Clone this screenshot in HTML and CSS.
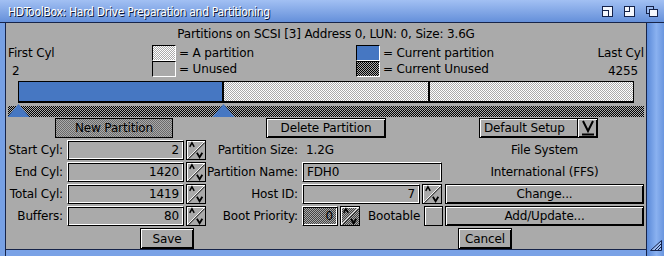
FILE: index.html
```html
<!DOCTYPE html>
<html>
<head>
<meta charset="utf-8">
<link rel="stylesheet" href="styles.css">
</head>
<body>
<svg class="defs" width="0" height="0">
  <symbol id="arr" viewBox="0 0 20 20">
    <path d="M1 19 L19 1" stroke="#fff" stroke-width="1"/>
    <path d="M2 19.5 L19.5 2" stroke="#000" stroke-width="1"/>
    <path d="M3 6.5 L5.5 2 L8 6.5" fill="none" stroke="#000" stroke-width="1.6"/>
    <path d="M11 13 L14 18 L17 13" fill="none" stroke="#000" stroke-width="2"/>
  </symbol>
  <symbol id="tri" viewBox="0 0 22 13">
    <path d="M0 13 L11 0 L22 13 Z" fill="#4677c2"/>
  </symbol>
</svg>
<div class="window">
  <div class="titlebar">
    <span class="title">HDToolBox: Hard Drive Preparation and Partitioning</span>
    <div class="gadgets">
      <svg class="gad" width="11" height="11" viewBox="0 0 11 11"><rect x="0.5" y="0.5" width="10" height="10" fill="#f4f7fd" stroke="#14224a"/><rect x="0.5" y="4.5" width="6" height="6" fill="#f4f7fd" stroke="#14224a"/></svg>
      <svg class="gad" width="11" height="11" viewBox="0 0 11 11"><rect x="0.5" y="0.5" width="10" height="10" fill="#f4f7fd" stroke="#14224a"/><rect x="0.5" y="0.5" width="5" height="5" fill="#f4f7fd" stroke="#14224a"/></svg>
      <svg class="gad" width="12" height="11" viewBox="0 0 12 11"><rect x="0.5" y="0.5" width="7" height="7" fill="#9dbbef" stroke="#14224a"/><rect x="3.5" y="3.5" width="8" height="7" fill="#f4f7fd" stroke="#14224a"/></svg>
    </div>
  </div>
  <div class="frame">
    <div class="lborder"></div>
    <div class="mid">
      <div class="content">
        <div class="header">Partitions on SCSI [3] Address 0, LUN: 0, Size: 3.6G</div>
        <div class="legend">
          <span class="cyl first">First Cyl</span>
          <div class="key"><span class="swatch sw-part"></span>= A partition</div>
          <div class="key"><span class="swatch sw-current"></span>= Current partition</div>
          <span class="cyl last">Last Cyl</span>
          <span class="cyl num first-num">2</span>
          <div class="key"><span class="swatch sw-unused"></span>= Unused</div>
          <div class="key"><span class="swatch sw-cur-unused"></span>= Current Unused</div>
          <span class="cyl num last-num">4255</span>
        </div>
        <div class="bar">
          <div class="seg seg-current" style="width:205px"></div>
          <div class="seg seg-part" style="width:206px"></div>
          <div class="seg seg-part seg-rest"></div>
        </div>
        <div class="slider">
          <svg class="handle" style="left:-1px" width="23" height="13"><use href="#tri"/></svg>
          <svg class="handle" style="left:204px" width="23" height="13"><use href="#tri"/></svg>
        </div>
        <div class="actions">
          <div class="btn ghost new">New Partition</div>
          <div class="btn delete">Delete Partition</div>
          <div class="btn cycle"><span class="cycle-text">Default Setup</span><span class="cycle-glyph"><svg width="14" height="16" viewBox="0 0 14 16"><path d="M2 1 L7 11 L12 1" fill="none" stroke="#000" stroke-width="2"/><path d="M1 14.5 L13 14.5" stroke="#000" stroke-width="2"/></svg></span></div>
        </div>
        <div class="form">
          <span class="lbl">Start Cyl:</span>
          <div class="field num w117">2</div>
          <div class="arrows"><svg width="20" height="18"><use href="#arr"/></svg></div>
          <span class="lbl">Partition Size:</span>
          <span class="val">1.2G</span>
          <span class="info">File System</span>

          <span class="lbl">End Cyl:</span>
          <div class="field num w117">1420</div>
          <div class="arrows"><svg width="20" height="18"><use href="#arr"/></svg></div>
          <span class="lbl">Partition Name:</span>
          <div class="field w140">FDH0</div>
          <span class="info">International (FFS)</span>

          <span class="lbl">Total Cyl:</span>
          <div class="field num w117">1419</div>
          <div class="arrows"><svg width="20" height="18"><use href="#arr"/></svg></div>
          <span class="lbl">Host ID:</span>
          <div class="cell">
            <div class="field num w118">7</div>
            <div class="arrows"><svg width="20" height="18"><use href="#arr"/></svg></div>
          </div>
          <div class="btn wide">Change...</div>

          <span class="lbl">Buffers:</span>
          <div class="field num w117">80</div>
          <div class="arrows"><svg width="20" height="18"><use href="#arr"/></svg></div>
          <span class="lbl">Boot Priority:</span>
          <div class="cell">
            <div class="field num ghost w36">0</div>
            <div class="arrows ghost"><svg width="20" height="18"><use href="#arr"/></svg></div>
            <span class="boot">Bootable</span>
            <div class="check"></div>
          </div>
          <div class="btn wide">Add/Update...</div>
        </div>
        <div class="bottom">
          <div class="btn small save">Save</div>
          <div class="btn small cancel">Cancel</div>
        </div>
      </div>
      <div class="bborder"></div>
    </div>
    <div class="rborder">
      <svg class="resize" width="12" height="11" viewBox="0 0 12 11"><path d="M11.5 0.5 L11.5 10.5 L0.5 10.5 Z" fill="#9dbbef" stroke="#14224a"/><path d="M11 4 L5 10 M11 7 L8 10" stroke="#14224a"/></svg>
    </div>
  </div>
</div>
</body>
</html>
```
FILE: styles.css
```css
* { box-sizing: border-box; }
html, body { margin: 0; padding: 0; }
body {
  width: 664px; height: 256px; overflow: hidden;
  font-family: "DejaVu Sans", "Liberation Sans", sans-serif;
  font-size: 12px; color: #000; background: #aaaaaa;
  letter-spacing: -0.15px;
}
.defs { position: absolute; }
.window { width: 664px; height: 256px; display: flex; flex-direction: column; }

.titlebar {
  height: 23px; flex: none; display: flex; align-items: center;
  background: linear-gradient(#a2c0f3, #6590da);
  border-bottom: 1px solid #16244a;
  padding: 1px 0 0 8px;
}
.title {
  color: #fff; text-shadow: 1px 1px 0 #0c1633;
  font-stretch: condensed; font-size: 12px; letter-spacing: -0.3px;
}
.gadgets { margin-left: auto; display: flex; align-items: center; padding-right: 6px; }
.gad { display: block; margin-left: 11px; }

.frame { flex: 1; display: flex; }
.lborder { width: 6px; background: #77a0e4; border-right: 1px solid #16244a; }
.rborder {
  width: 18px; border-left: 1px solid #16244a;
  background: linear-gradient(to right, #5a89d8, #8ab1f0 55%, #6a96df);
  display: flex; flex-direction: column; justify-content: flex-end;
  padding: 0 0 5px 3px;
}
.resize { display: block; }
.mid { width: 640px; display: flex; flex-direction: column; }
.content { height: 226px; background: #aaaaaa; }
.bborder { flex: 1; background: #7aa2e6; border-top: 1px solid #16244a; }

.header { margin-top: 4px; height: 14px; line-height: 14px; text-align: center; }

.legend {
  margin-top: 4px;
  display: grid;
  grid-template-columns: 146px 204px 1fr auto;
  grid-template-rows: 16px 16px;
  line-height: 16px;
}
.cyl { white-space: nowrap; }
.first { padding-left: 2px; }
.first-num { padding-left: 6px; padding-top: 2px; }
.last { padding-right: 2px; text-align: right; }
.last-num { padding-right: 8px; padding-top: 2px; text-align: right; }
.key { display: flex; align-items: center; gap: 3px; white-space: nowrap; }
.swatch {
  width: 24px; height: 16px; flex: none;
  border: 1px solid; border-color: #000 #fff #fff #000;
}
.sw-part { background: repeating-conic-gradient(#fff 0 25%, #aaa 0 50%) 0 0 / 2px 2px; }
.sw-unused { background: #aaa; }
.sw-current { background: #4677c2; }
.sw-cur-unused { background: repeating-conic-gradient(#000 0 25%, #aaa 0 50%) 0 0 / 2px 2px; }

.bar {
  margin: 4px 0 0 12px; width: 616px; height: 22px;
  border: 1px solid #000; border-bottom-width: 2px;
  display: flex;
}
.seg { height: 100%; border-right: 2px solid #000; }
.seg-current { background: #4677c2; }
.seg-part { background: repeating-conic-gradient(#fff 0 25%, #aaa 0 50%) 0 0 / 2px 2px; }
.seg-rest { flex: 1; border-right: 0; }

.slider {
  position: relative;
  margin: 3px 0 0 2px; width: 636px; height: 11px;
  background: repeating-conic-gradient(#000 0 25%, #aaa 0 50%) 0 0 / 2px 2px;
}
.handle { position: absolute; top: -2px; }

.actions { margin-top: 1px; height: 20px; display: flex; }
.btn {
  height: 100%; display: flex; align-items: center; justify-content: center;
  border: 1px solid #000;
  box-shadow: inset 1px 1px 0 #fff, inset -1px -1px 0 #000;
  background: #aaa; white-space: nowrap;
}
.ghost { background: repeating-conic-gradient(#6a6a6a 0 25%, #aaa 0 50%) 0 0 / 2px 2px; }
.btn.ghost { box-shadow: none; }
.new { margin-left: 49px; width: 118px; }
.delete { margin-left: 93px; width: 120px; }
.cycle { margin-left: 93px; width: 119px; justify-content: space-between; }
.cycle-text { padding-left: 4px; }
.cycle-glyph {
  width: 20px; height: 100%; display: flex; align-items: center; justify-content: center;
  border-left: 1px solid #000; box-shadow: inset 1px 0 0 #fff;
}
.cycle-glyph svg { display: block; }

.form {
  margin-top: 2px;
  display: grid;
  grid-template-columns: 61px 119px 20px 96px 143px 201px;
  grid-auto-rows: 20px; row-gap: 2px;
  line-height: 20px;
}
.lbl { text-align: right; padding-right: 4px; white-space: nowrap; }
.val { padding-left: 4px; }
.info { text-align: center; padding-right: 2px; white-space: nowrap; }
.field {
  height: 20px; padding: 0 4px; line-height: 18px; white-space: nowrap;
  border: 1px solid; border-color: #fff #000 #000 #fff;
  box-shadow: inset 1px 1px 0 #000, inset -1px -1px 0 #fff;
  background-color: #aaa;
}
.field.ghost { background: repeating-conic-gradient(#444 0 25%, #aaa 0 50%) 0 0 / 2px 2px; }
.field.num { text-align: right; }
.w117 { width: 117px; }
.w118 { width: 118px; }
.w140 { width: 140px; }
.w36 { width: 36px; }
.arrows {
  width: 20px; height: 20px;
  border: 1px solid #000; box-shadow: inset 1px 1px 0 #fff;
  background: #aaa;
}
.arrows.ghost { background: repeating-conic-gradient(#444 0 25%, #aaa 0 50%) 0 0 / 2px 2px; }
.arrows svg { display: block; margin: 0 -1px; }
.cell { display: flex; gap: 2px; align-items: center; }
.boot { margin-left: 6px; }
.check {
  width: 19px; height: 20px; margin-left: auto; margin-right: 2px;
  border: 1px solid #000; box-shadow: inset 1px 1px 0 #fff;
}
.wide { width: 199px; }

.bottom { margin-top: 2px; height: 21px; display: flex; }
.small { width: 54px; }
.save { margin-left: 134px; }
.cancel { margin-left: 264px; }
```
